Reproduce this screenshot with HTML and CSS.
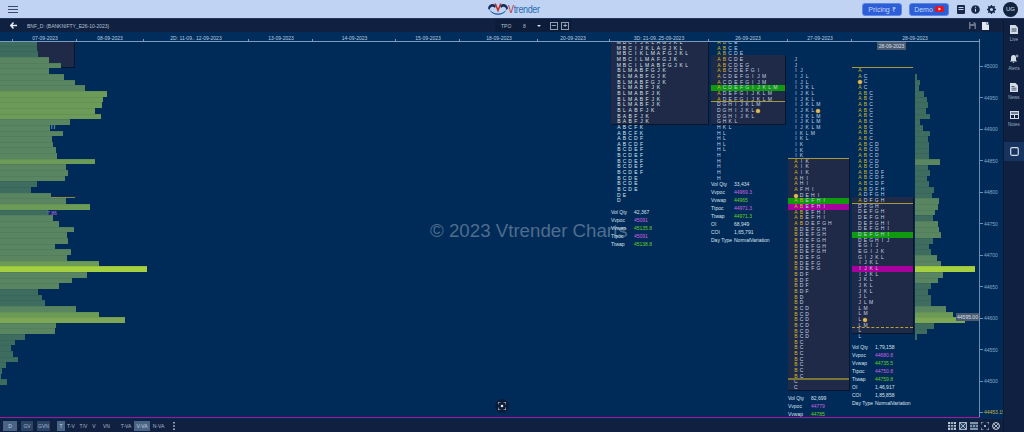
FILE: index.html
```html
<!DOCTYPE html>
<html lang="en">
<head>
<meta charset="utf-8">
<title>Vtrender Charts</title>
<link rel="stylesheet" href="styles.css">
</head>
<body>
<div class="app">
  <header class="topbar">
    <div class="top-left">
      <svg class="burger" width="10" height="7" viewBox="0 0 10 7"><path d="M0 .5h10M0 3.5h10M0 6.5h10" stroke="#3b4a68" stroke-width="1.1"/></svg>
    </div>
    <div class="logo">
      <svg width="20" height="13" viewBox="0 0 20 13">
        <path d="M0 5.500C.5 1 5 -.5 8 2.500L7 5C5 3 2.500 3 1.500 7Z" fill="#12305f"/>
        <path d="M20 5.500C19.500 1 15 -.5 12 2.500L13 5C15 3 17.500 3 18.500 7Z" fill="#12305f"/>
        <path d="M6.500 .5L10 9.500L13.500 .5L12 .5L10 5.500L8 .5Z" fill="#c8281e"/>
        <path d="M1.500 6.500C4 13.500 16 13.500 18.500 6.500C15.500 10 12.500 10.500 10 10.500C7.500 10.500 4.500 10 1.500 6.500Z" fill="#1f5fae"/>
      </svg>
      <span class="logo-text"><span class="logo-v">V</span>trender</span>
    </div>
    <div class="top-right">
      <button class="cta">Pricing ₹</button>
      <button class="cta cta-demo">Demo
        <svg width="9" height="6" viewBox="0 0 9 6"><rect width="9" height="6" rx="1.500" fill="#e8141c"/><path d="M3.500 1.500L6 3L3.500 4.500Z" fill="#fff"/></svg>
      </button>
      <svg class="ticon" width="8" height="9" viewBox="0 0 8 9"><rect width="8" height="9" rx="1" fill="#17284a"/><path d="M1.500 2.500h5M1.500 4.500h5" stroke="#c0d3f2"/></svg>
      <svg class="ticon" width="9" height="9" viewBox="0 0 9 9"><circle cx="4.500" cy="4.500" r="4.300" fill="#17284a"/><path d="M4.500 3.800v3M4.500 1.700v1" stroke="#c0d3f2" stroke-width="1.100"/></svg>
      <svg class="ticon" width="9" height="9" viewBox="0 0 9 9"><circle cx="4.500" cy="4.500" r="2.500" fill="none" stroke="#17284a" stroke-width="1.800"/><path d="M4.500 0v2M4.500 7v2M0 4.500h2M7 4.500h2M1.300 1.300l1.400 1.400M6.300 6.300l1.400 1.400M7.700 1.300L6.300 2.700M2.700 6.300L1.300 7.700" stroke="#17284a" stroke-width="1.300"/></svg>
      <div class="avatar">UG</div>
    </div>
  </header>

  <div class="workspace">
    <div class="stage">
      <div class="toolbar">
        <svg class="back" width="7" height="7" viewBox="0 0 7 7"><path d="M3.500.5L.8 3.500L3.500 6.500M1 3.500H7" fill="none" stroke="#e8eef6" stroke-width="1.500"/></svg>
        <span class="symbol">BNF_D: (BANKNIFTY_E26-10-2023)</span>
        <div class="tpo-group">
          <span class="tpo-label">TPO</span>
          <span class="tpo-val">8</span>
          <span class="tpo-caret"></span>
          <span class="step">−</span>
          <span class="step">+</span>
        </div>
        <div class="tool-right">
          <svg width="7" height="7" viewBox="0 0 7 7"><path d="M0 0h5.500L7 1.500V7H0Z" fill="#6a7688"/><path d="M1.500 0h3v2h-3ZM1.500 4h4v3h-4Z" fill="#0f2040"/></svg>
          <svg width="7" height="8" viewBox="0 0 7 8"><path d="M0 0h4.500v2.500H7V8H0Z" fill="#dfe6ee"/><path d="M5.500 0v2M4.500 1h2" stroke="#dfe6ee" stroke-width=".8"/></svg>
        </div>
      </div>

      <div class="canvas" id="canvas">
        <div class="axis-x" id="axisX"></div>
        <div class="shade shade-a"></div>
        <div class="shade shade-b"></div>
        <div class="shade shade-c"></div>
        <div class="shade shade-d"></div>
        <div class="shade shade-e"></div>
        <div class="profile profile-left" id="leftProfile"></div>
        <div class="profile profile-right" id="rightProfile"></div>

        <span class="note note-ii">I I</span>
        <span class="note note-pur">7.86</span>
        <div class="rule rule-left"></div>

        <div class="watermark">© 2023 Vtrender Charts</div>

        <div class="tpo tpo-1" id="tpo1"></div>
        <div class="tpo tpo-2" id="tpo2"></div>
        <div class="tpo tpo-3" id="tpo3"></div>
        <div class="tpo tpo-4" id="tpo4"></div>

        <div class="rule rule-2"></div>
        <div class="rule rule-3a"></div>
        <div class="rule rule-3b"></div>
        <div class="rule rule-4a"></div>
        <div class="rule rule-4b"></div>
        <div class="rule rule-4c"></div>

        <dl class="stats stats-1">
          <dt>Vol Qty</dt><dd>42,367</dd>
          <dt>Vvpoc</dt><dd class="pur">45091</dd>
          <dt>Vvwap</dt><dd class="grn">45135.8</dd>
          <dt>Ttpoc</dt><dd class="pur">45091</dd>
          <dt>Ttwap</dt><dd class="grn">45138.8</dd>
        </dl>
        <dl class="stats stats-2">
          <dt>Vol Qty</dt><dd>33,434</dd>
          <dt>Vvpoc</dt><dd class="pur">44969.3</dd>
          <dt>Vvwap</dt><dd class="grn">44965</dd>
          <dt>Ttpoc</dt><dd class="pur">44971.3</dd>
          <dt>Ttwap</dt><dd class="grn">44971.3</dd>
          <dt>OI</dt><dd>68,949</dd>
          <dt>COI</dt><dd>1,65,791</dd>
          <dt>Day Type</dt><dd>NormalVariation</dd>
        </dl>
        <dl class="stats stats-3">
          <dt>Vol Qty</dt><dd>82,699</dd>
          <dt>Vvpoc</dt><dd class="pur">44779</dd>
          <dt>Vvwap</dt><dd class="grn">44785</dd>
        </dl>
        <dl class="stats stats-4">
          <dt>Vol Qty</dt><dd>1,79,158</dd>
          <dt>Vvpoc</dt><dd class="pur">44680.8</dd>
          <dt>Vvwap</dt><dd class="grn">44735.5</dd>
          <dt>Ttpoc</dt><dd class="pur">44750.8</dd>
          <dt>Ttwap</dt><dd class="grn">44759.8</dd>
          <dt>OI</dt><dd>1,46,917</dd>
          <dt>COI</dt><dd>1,85,858</dd>
          <dt>Day Type</dt><dd>NormalVariation</dd>
        </dl>

        <div class="axis-y" id="axisY"></div>
        <div class="base-line"></div>
        <span class="badge badge-date">28-09-2023</span>
        <span class="badge badge-price">44595.00</span>
        <div class="shot">
          <svg width="8" height="8" viewBox="0 0 8 8"><path d="M0 2.500V0h2.500M5.500 0H8v2.500M8 5.500V8H5.500M2.500 8H0V5.500" fill="none" stroke="#e0e8f0" stroke-width=".9"/><circle cx="4" cy="4" r="1.300" fill="#e0e8f0"/></svg>
        </div>
      </div>

      <footer class="footer">
        <span class="fb w14 on">D</span>
        <span class="fb w12 ml4 mid">GV</span>
        <span class="fb w13 ml4 mid">GVN</span>
        <span class="fb w8 ml7 on">T</span>
        <span class="fb w10 ml1">T-V</span>
        <span class="fb w9 ml3">T/V</span>
        <span class="fb w6 ml3">V</span>
        <span class="fb w11 ml4">VN</span>
        <span class="fb w12 ml8">T-VA</span>
        <span class="fb w16 ml2 on">V-VA</span>
        <span class="fb w13 ml2">N-VA</span>
        <svg class="dots" width="2" height="8" viewBox="0 0 2 8"><path d="M1 0v1.500M1 3.200v1.500M1 6.500V8" stroke="#d0dae6" stroke-width="1.400"/></svg>
        <div class="foot-icons">
          <span class="fi fi-on"><svg width="8" height="8" viewBox="0 0 8 8"><path d="M0 2.500h8M0 5.200h8M2.700 0v8M5.300 0v8" stroke="#0f2040" stroke-width=".9"/></svg></span>
          <span class="fi fi-mid"><svg width="8" height="8" viewBox="0 0 8 8"><path d="M.5.500h7v7h-7ZM.5.500l7 7M7.500.500l-7 7" fill="none" stroke="#c4d0dc" stroke-width=".8"/></svg></span>
          <span class="fi fi-mid"><svg width="8" height="8" viewBox="0 0 8 8"><path d="M0 4h2M3 4h2M6 4h2M0 1h8M0 7h8" stroke="#d8e0ea"/></svg></span>
          <span class="fi"><svg width="8" height="8" viewBox="0 0 8 8"><path d="M0 2.500V0h2.500M5.500 0H8v2.500M8 5.500V8H5.500M2.500 8H0V5.500" fill="none" stroke="#d8e0ea" stroke-width=".8"/><circle cx="4" cy="4" r="1" fill="#d8e0ea"/></svg></span>
          <span class="fi"><svg width="8" height="8" viewBox="0 0 8 8"><circle cx="4" cy="4" r="3.400" fill="none" stroke="#d8e0ea"/><path d="M2 2l4 4M6 2L2 6" stroke="#d8e0ea" stroke-width=".8"/></svg></span>
        </div>
      </footer>
    </div>

    <aside class="sidebar">
      <div class="side-item">
        <svg width="8" height="9" viewBox="0 0 8 9"><path d="M0 0h5.500L8 2.500V9H0Z" fill="#d4dce6"/><path d="M1.500 4h5M1.500 6h5" stroke="#0f2040" stroke-width=".8"/></svg>
        <span>Live</span>
      </div>
      <div class="side-item">
        <svg width="9" height="9" viewBox="0 0 9 9"><path d="M3.500 1C5.500 1 6 2.500 6 4V6L7 7.500H0L1 6V4C1 2.500 1.500 1 3.500 1ZM2.500 8h2L3.500 9Z" fill="#d4dce6"/><path d="M7 .5v3M5.500 2h3" stroke="#d4dce6" stroke-width=".8"/></svg>
        <span>Alerts</span>
      </div>
      <div class="side-item">
        <svg width="8" height="9" viewBox="0 0 8 9"><path d="M0 0h5.500L8 2.500V9H0Z" fill="#d4dce6"/><path d="M1.500 3.500h3M1.500 5.200h5M1.500 7h5" stroke="#0f2040" stroke-width=".7"/></svg>
        <span>News</span>
      </div>
      <div class="side-item">
        <svg width="9" height="8" viewBox="0 0 9 8"><rect width="9" height="8" fill="#d4dce6"/><path d="M1 1.500h7v1H1ZM1 4h3v3H1ZM5 4h3v3H5Z" fill="#0f2040"/></svg>
        <span>Notes</span>
      </div>
      <div class="side-active">
        <svg width="9" height="9" viewBox="0 0 9 9"><rect x=".7" y=".7" width="7.600" height="7.600" rx="1.200" fill="none" stroke="#d4dce6" stroke-width="1.200"/></svg>
      </div>
    </aside>
  </div>
</div>
<script src="chart.js"></script>
</body>
</html>
```

FILE: styles.css
```css
* { box-sizing: border-box; }
html, body { margin: 0; padding: 0; }
body {
  width: 1024px;
  height: 432px;
  overflow: hidden;
  font-family: "Liberation Sans", Arial, sans-serif;
  background: #002b59;
}
.app { display: flex; flex-direction: column; width: 1024px; height: 432px; }

/* top bar */
.topbar {
  flex: 0 0 19px;
  display: grid;
  grid-template-columns: 1fr auto 1fr;
  align-items: center;
  background: #c0d3f2;
  border-bottom: 1px solid #24365e;
}
.top-left { display: flex; padding-left: 8px; }
.burger { display: block; }
.logo { display: flex; align-items: center; height: 18px; }
.logo-text { font-size: 11px; letter-spacing: -.45px; color: #2a6cb4; transform: scaleX(.82); transform-origin: left center; width: 28px; white-space: nowrap; }
.logo-v { color: #c8281e; }
.top-right { display: flex; align-items: center; justify-content: flex-end; padding-right: 6px; }
.cta {
  display: flex;
  align-items: center;
  justify-content: center;
  gap: 2px;
  width: 40px;
  height: 13px;
  margin: 0 7px 0 0;
  padding: 0;
  border: 1px solid #5d86e6;
  border-radius: 3px;
  background: #2c5ed8;
  color: #c8d8f6;
  font: 7px "Liberation Sans", Arial, sans-serif;
}
.cta-demo { margin-right: 8px; }
.ticon { margin-right: 6px; flex: none; }
.ticon + .ticon { margin-right: 7px; }
.avatar {
  width: 15px; height: 15px; border-radius: 50%;
  background: #12233f; color: #d8e2f0;
  font-size: 6px; line-height: 15px; text-align: center;
}

/* frame */
.workspace { flex: 1; display: flex; min-height: 0; }
.stage { width: 1003px; display: flex; flex-direction: column; }
.sidebar {
  width: 21px;
  background: #0f2040;
  display: flex;
  flex-direction: column;
  padding-top: 6px;
  border-left: 1px solid #0a1830;
}
.side-item {
  height: 28.8px;
  display: flex;
  flex-direction: column;
  align-items: center;
  gap: 3px;
  color: #9fb0c4;
  font-size: 4.500px;
  line-height: 5px;
}
.side-active {
  margin-top: 1.800px;
  height: 19px;
  display: flex;
  align-items: center;
  justify-content: center;
  background: #17335f;
}

/* toolbar */
.toolbar {
  flex: 0 0 13px;
  display: flex;
  align-items: center;
  background: #0f2040;
  color: #b4c2d4;
  font-size: 5px;
  padding-left: 10px;
}
.back { flex: none; }
.symbol { margin-left: 10px; width: 80px; white-space: nowrap; }
.tpo-group { display: flex; align-items: center; margin-left: 388px; height: 13px; padding-left: 6px; background: #0d1c38; }
.tpo-label { width: 22px; }
.tpo-val { width: 14px; }
.tpo-caret { width: 0; height: 0; border: 2px solid transparent; border-top: 2px solid #d8e2f0; border-bottom: 0; margin-right: 9px; }
.step {
  width: 8px; height: 8px; margin-right: 3px;
  border: 1px solid #8d9db2;
  color: #dfe6ee;
  font-size: 8px; line-height: 6px; text-align: center;
}
.tool-right { display: flex; align-items: center; gap: 6px; margin-left: auto; padding-right: 14px; }

/* canvas */
.canvas { position: relative; flex: 1; background: #002b59; overflow: hidden; }
.axis-x {
  position: absolute; left: 0; top: 0; width: 980px; height: 10px; z-index: 3;
  background: #002d5b;
  border-bottom: 1px solid #7d9cbc;
}
.time-label {
  position: absolute; top: 2.500px; transform: translateX(-50%);
  color: #bccde0; font-size: 5px; line-height: 6px; white-space: nowrap;
}
.time-tick { position: absolute; top: 7px; width: 1px; height: 3px; background: #7d9cbc; }

.profile { position: absolute; display: flex; flex-direction: column; }
.profile-left { left: 0; top: 8px; align-items: flex-start; }
.profile-right { left: 915px; top: 42px; align-items: flex-start; }
.bar { height: 5.67px; flex: none; border-top: 1px solid rgba(0, 30, 50, .07); }
.lv1 { background: #3e6c5e; }
.lv2 { background: #598660; }
.lv3 { background: #6c9b58; }
.lv4 { background: #7da755; }
.peak { background: #a5d040; }

.shade {
  position: absolute;
  background: #1f2a48;
  box-shadow: 1px 1px 0 #0b1428;
}
.shade-a { left: 0; top: 9px; width: 74px; height: 26px; }
.shade-b { left: 611px; top: 9px; width: 97px; height: 83px; }
.shade-c { left: 711px; top: 23px; width: 74px; height: 69px; }
.shade-d { left: 788px; top: 126px; width: 61px; height: 232px; }
.shade-e { left: 852px; top: 165px; width: 61px; height: 136px; }

.watermark {
  position: absolute; left: 430px; top: 188px;
  color: #4f6d8c;
  font-size: 18.7px; line-height: 22px;
  white-space: nowrap;
}

.tpo { position: absolute; z-index: 1; }
.tpo-1 { left: 611px; top: 8px; width: 97px; }
.tpo-2 { left: 711px; top: 8px; width: 74px; }
.tpo-3 { left: 788px; top: 25px; width: 61px; }
.tpo-4 { left: 852px; top: 36px; width: 61px; }
.row {
  display: flex;
  height: 5.67px;
  padding-left: 5px;
  font-size: 5px;
  line-height: 5.67px;
  color: #c4d4e4;
}
.tpo-1 .row { color: #dde6ee; }
.cell { flex: 0 0 5.67px; text-align: center; }
.y { color: #d6b81e; }
.row-green { background: #0f9a10; }
.row-magenta { background: #a8009c; }
.tpo-pin {
  display: block; width: 4px; height: 4px; margin: .8px 0 0 .8px;
  border-radius: 50%;
  background: #e0bc60;
  box-shadow: 0 0 0 .5px #6a5420;
}

.rule { position: absolute; height: 1px; background: #a39a3a; z-index: 2; }
.rule-left { left: 51px; top: 165px; width: 24px; background: #8a8a40; }
.rule-2 { left: 711px; top: 69px; width: 74px; }
.rule-3a { left: 788px; top: 126px; width: 61px; }
.rule-3b { left: 788px; top: 346px; width: 61px; height: 2px; background: #7c7636; }
.rule-4a { left: 852px; top: 35px; width: 61px; }
.rule-4b { left: 852px; top: 171px; width: 61px; }
.rule-4c { left: 852px; top: 295px; width: 61px; background: none; border-top: 1px dashed #b8a030; }

.note { position: absolute; font-size: 5px; line-height: 6px; z-index: 2; }
.note-ii { left: 51px; top: 92px; color: #d8e4ee; }
.note-pur { left: 47px; top: 178px; color: #c070e8; }

.stats {
  position: absolute; z-index: 2; margin: 0;
  display: grid;
  grid-template-columns: 23px auto;
  grid-auto-rows: 8px;
  font-size: 5px; line-height: 8px;
  white-space: nowrap;
  color: #d8e2ec;
}
.stats dt, .stats dd { margin: 0; }
.stats-1 { left: 611px; top: 176px; }
.stats-2 { left: 711px; top: 148px; }
.stats-3 { left: 788px; top: 362px; }
.stats-4 { left: 852px; top: 311px; }
.pur { color: #d060e0; }
.grn { color: #68d020; }

.axis-y {
  position: absolute; left: 979px; top: 9px; width: 24px; height: 377px;
  border-left: 1px solid #6f8fb0;
  z-index: 2;
}
.y-item {
  position: absolute; left: 0;
  display: flex; align-items: center; gap: 1px;
  color: #86a6c6; font-size: 5px; line-height: 6px;
  white-space: nowrap;
}
.y-item::before { content: ""; width: 3px; height: 1px; background: #6f8fb0; }
.y-last { color: #c8b040; }
.base-line { position: absolute; left: 0; top: 385px; width: 980px; height: 1px; background: #a0189c; z-index: 3; }
.badge {
  position: absolute; z-index: 4;
  background: #4a5a70; color: #d8e0ea;
  font-size: 5px; text-align: center;
}
.badge-date { left: 877px; top: 10px; width: 29px; height: 8px; line-height: 8px; }
.badge-price { left: 956px; top: 281px; width: 23px; height: 8px; line-height: 8px; }
.shot {
  position: absolute; left: 495px; top: 367px; z-index: 4;
  width: 14px; height: 14px; border-radius: 50%;
  background: #0c1c38;
  display: flex; align-items: center; justify-content: center;
}

/* footer */
.footer {
  flex: 0 0 13px;
  display: flex;
  align-items: center;
  padding-left: 3px;
  background: #0f2040;
}
.fb {
  height: 10px;
  font-size: 5px; line-height: 10px; text-align: center;
  color: #a8b8cc;
  white-space: nowrap;
}
.on { background: #4a6488; color: #c4d0de; }
.mid { background: #2a4468; }
.w6 { width: 6px; } .w8 { width: 8px; } .w9 { width: 9px; } .w10 { width: 10px; }
.w11 { width: 11px; } .w12 { width: 12px; } .w13 { width: 13px; } .w14 { width: 14px; } .w16 { width: 16px; }
.ml1 { margin-left: 1px; } .ml2 { margin-left: 2px; } .ml3 { margin-left: 3px; } .ml4 { margin-left: 4px; }
.ml7 { margin-left: 7px; } .ml8 { margin-left: 8px; }
.dots { margin-left: 8px; }
.foot-icons { display: flex; gap: 3px; margin-left: auto; padding-right: 3px; }
.fi { width: 8px; height: 8px; display: flex; }
.fi-on { background: #b8c6d6; }
.fi-mid { background: #2a4468; }
```

FILE: chart.js
```js
(function () {
  var $ = function (id) { return document.getElementById(id); };
  function make(cls, text) {
    var el = document.createElement(cls === 'bar' || cls === 'row' ? 'div' : 'span');
    el.className = cls;
    if (text !== undefined) el.textContent = text;
    return el;
  }

  /* Time axis */
  var labels = [['07-09-2023', 45], ['08-09-2023', 110], ['2D: 11-09.. 12-09-2023', 196], ['13-09-2023', 281],
    ['14-09-2023', 354.5], ['15-09-2023', 428], ['18-09-2023', 499], ['20-09-2023', 573],
    ['3D: 21-09..25-09-2023', 659], ['26-09-2023', 748], ['27-09-2023', 820], ['28-09-2023', 915]];
  var ticks = [12, 76, 143, 248, 312, 395, 459, 537, 609, 708, 787, 851, 979];
  labels.forEach(function (l) {
    var s = make('time-label', l[0]);
    s.style.left = l[1] + 'px';
    $('axisX').appendChild(s);
  });
  ticks.forEach(function (x) {
    var s = make('time-tick');
    s.style.left = x + 'px';
    $('axisX').appendChild(s);
  });

  /* Price axis */
  var prices = ['45000', '44950', '44900', '44850', '44800', '44750', '44700', '44650', '44600', '44550', '44500'];
  prices.forEach(function (p, i) {
    var s = make('y-item', p);
    s.style.top = (66 + i * 31.5 - 44) + 'px';
    $('axisY').appendChild(s);
  });
  var last = make('y-item y-last', '44453.15');
  last.style.top = (412 - 44) + 'px';
  $('axisY').appendChild(last);

  /* Volume profiles */
  function profile(host, widths, max) {
    widths.forEach(function (w) {
      var r = w / max;
      var lv = r === 1 ? 'peak' : r >= 0.8 ? 'lv4' : r >= 0.6 ? 'lv3' : r >= 0.33 ? 'lv2' : 'lv1';
      var b = make('bar');
      b.className = 'bar ' + lv;
      b.style.width = w + 'px';
      host.appendChild(b);
    });
  }
  profile($('leftProfile'), [37, 37, 38, 49, 61, 49, 64, 75, 85, 107, 103, 102, 95, 101, 70, 50, 63, 52,
    53, 56, 57, 95, 66, 68, 65, 37, 31, 51, 66, 90, 48, 53, 59, 74, 67, 68, 55, 71, 67, 99,
    147, 87, 72, 59, 38, 42, 45, 76, 99, 125, 56, 55, 25, 15, 11, 13, 18, 6, 2, 1, 7], 147);
  profile($('rightProfile'), [2, 5, 4, 9, 12, 13, 11, 15, 5, 8, 15, 13, 14, 14, 14, 25, 13, 15, 12, 14, 19, 17,
    24, 23, 20, 18, 23, 24, 26, 18, 14, 16, 22, 26, 60, 28, 23, 16, 13, 16, 16, 31, 38, 50, 19, 12, 2], 60);

  /* TPO letter columns: '*' is the open marker, g:/m: prefix highlights a row */
  function tpo(host, rows, yellow) {
    rows.forEach(function (str) {
      var row = make('row');
      if (str.indexOf('g:') === 0) { row.className = 'row row-green'; str = str.slice(2); }
      if (str.indexOf('m:') === 0) { row.className = 'row row-magenta'; str = str.slice(2); }
      str.split('').forEach(function (ch) {
        var c = make('cell');
        if (ch === '*') {
          c.appendChild(make('tpo-pin'));
        } else {
          c.textContent = ch;
          if (yellow.indexOf(ch) >= 0) c.className = 'cell y';
        }
        row.appendChild(c);
      });
      host.appendChild(row);
    });
  }

  tpo($('tpo1'), ['MBCIJKLAGJKL', 'MBCIJKLAGJKL', 'MBCIKLMAFGJKL', 'MBCILMAFGJK', 'MBCILMABFGJKL',
    'BLMABFGJK', 'BLMABFGJK', 'BLMABFGJK', 'BLMABFJK', 'BLMABFJK', 'BLMABFJK', 'BLMABFJK',
    'BLABFJK', 'BABFJK', 'BABFJK', 'ABCFK', 'ABCFK', 'ABCDF', 'ABCDF',
    'BCDEF', 'BCDEF', 'BCDEF', 'BCDEF', 'BCDEF', 'BCDE', 'BCDE', 'BCDE', 'DE', 'D'], '');

  tpo($('tpo2'), ['ABCE', 'ABCE', 'ABCDE', 'ABCDE', 'ABCDEG', 'ABCDEFGI', 'ACDEFGIJM', 'ACDEFGIJM',
    'g:ACDEFGIJKLM', 'ADEFGIJKLM', 'ADEFGIJKLM', 'DGHIJKLM', 'DGHIJKL*', 'DGHIJKL', 'GHKL',
    'HKL', 'HL', 'HL', 'HL', 'HL', 'H', 'H', 'H', 'H', 'H'], 'AB');

  tpo($('tpo3'), ['J', 'J', 'IJ', 'IJL', 'IJL', 'IJKL', 'IJKL', 'IJKL', 'IJKLM', 'IJKL*', 'IJKLM', 'IJKLM', 'IJKLM',
    'IKLM', 'IKL', 'IK', 'IK', 'IK', 'AIK', 'AIK', 'AIK', 'AHI', 'AHI', 'AFHI', '*DEHI',
    'g:ABEFHI', 'm:ABEFHI', 'ABEFHI', 'ABEFHI', 'ABDEFGH', 'BDEFGH', 'BDEFGH', 'BDEFGH', 'BDEFGH', 'BDEFGH',
    'BDEFG', 'BDEFG', 'BDEFG', 'BDF', 'BDF', 'BDF', 'BDF', 'BD', 'BD', 'BCD', 'BCD', 'BCD', 'BCD', 'BCD', 'BCD',
    'BC', 'BC', 'BC', 'BC', 'BC', 'BC', 'BC', 'C', 'C'], 'AB');

  tpo($('tpo4'), ['A', 'AC', '*C', 'AC', 'ABC', 'ABC', 'ABC', 'ABC', 'ABC', 'ABC', 'ABC', 'ABC', 'ABC',
    'ABCD', 'ABCD', 'ABCD', 'ABCD', 'ABCD', 'ABCDF', 'ABCDF', 'ABCDF', 'ABDFH', 'ADFGH', 'ADFGH',
    'DFGH', 'DEFGH', 'DEFGH', 'DEFGHI', 'DEFGHI', 'g:DEFGHI', 'DEGHIJ', 'EGIJ', 'EGIJK', 'GIJKL', 'IJKL',
    'm:IJKL', 'IJKL', 'JKL', 'JKL', 'JKL', 'JL', 'JLM', 'LM', 'LM', 'L*', 'LM', 'L', 'L'], 'AB');
})();
```
